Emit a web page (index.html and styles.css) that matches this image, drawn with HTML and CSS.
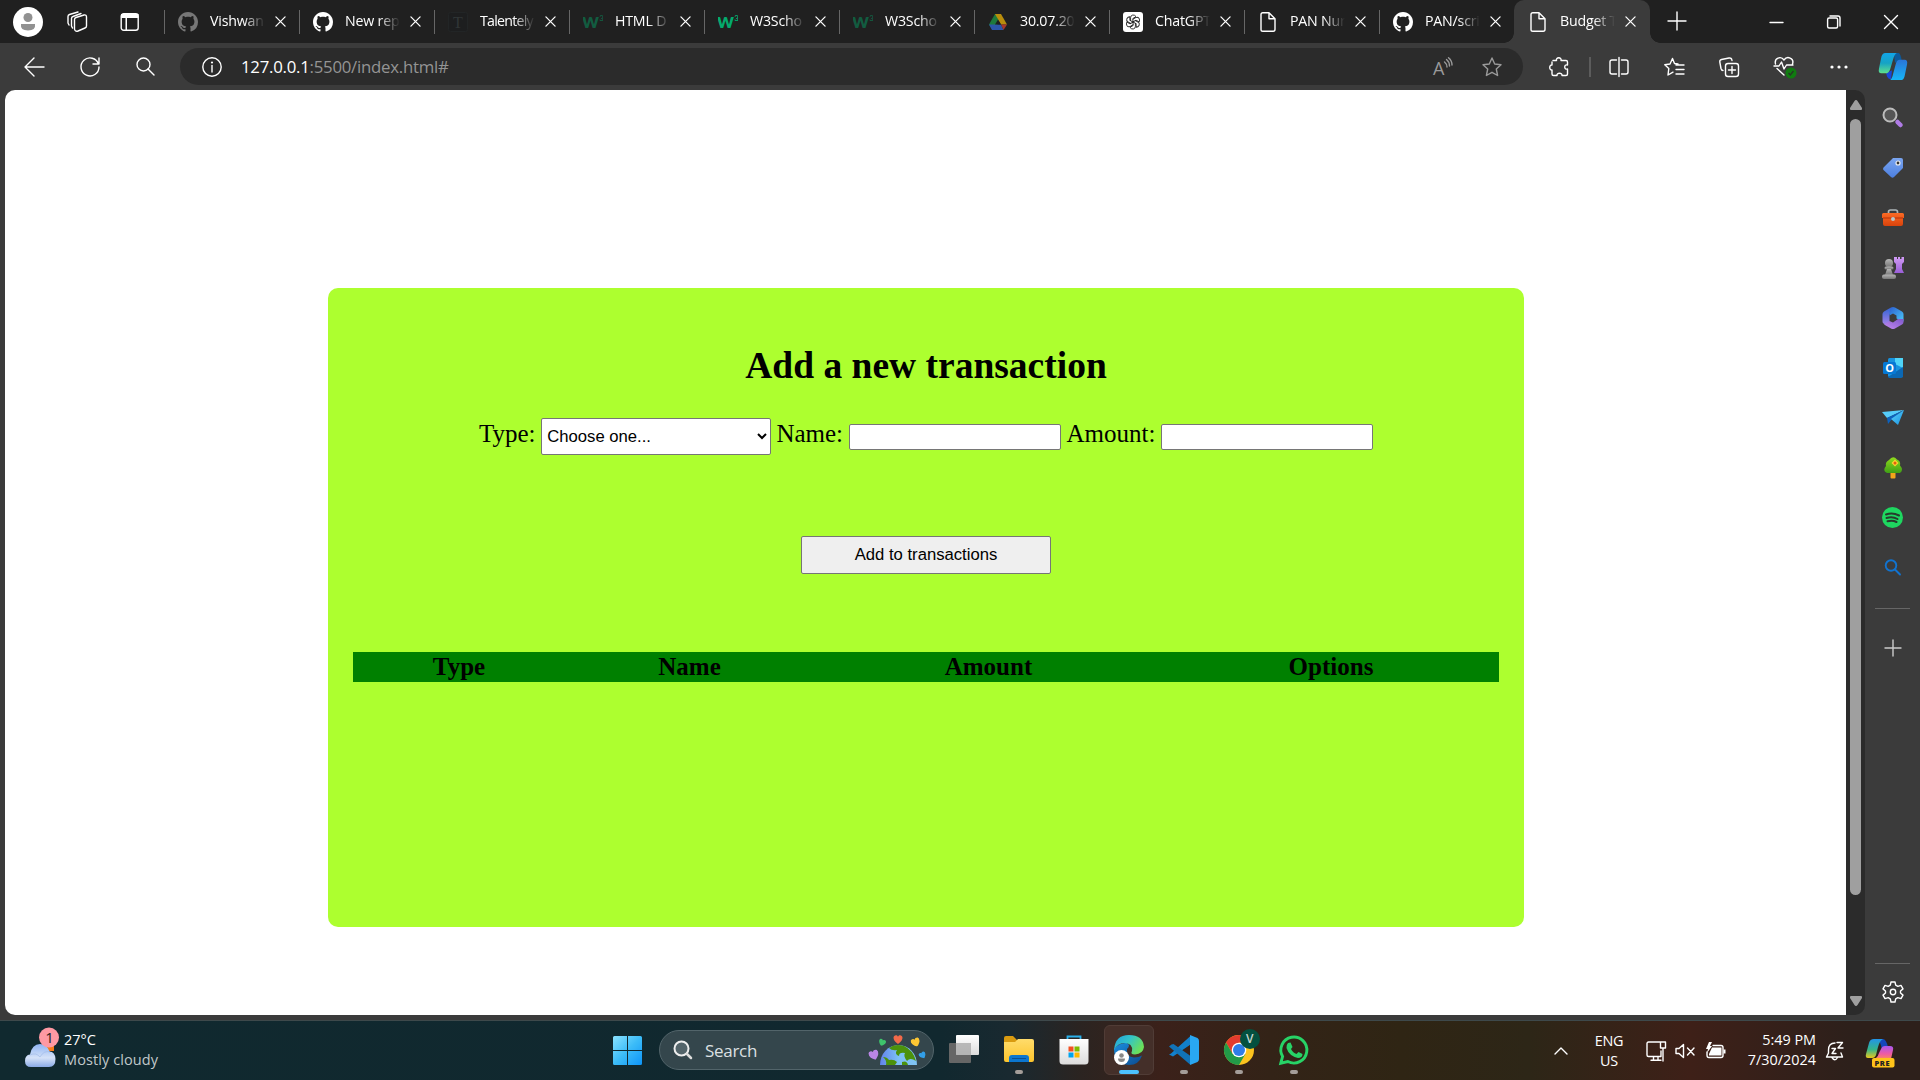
FILE: index.html
```html
<!DOCTYPE html>
<html lang="en">
<head>
<meta charset="utf-8">
<title>Budget Tracker</title>
<link rel="stylesheet" href="styles.css">
</head>
<body>
<svg width="0" height="0" class="defs">
  <defs>
    <linearGradient id="gWin" x1="0" y1="0" x2="1" y2="1"><stop offset="0" stop-color="#8be3ff"/><stop offset=".5" stop-color="#3cbcf8"/><stop offset="1" stop-color="#0d94f8"/></linearGradient>
    <linearGradient id="gCop1" x1="0" y1="0" x2="0" y2="1"><stop offset="0" stop-color="#12a5e8"/><stop offset=".5" stop-color="#16a3c4"/><stop offset="1" stop-color="#5fe08c"/></linearGradient>
    <linearGradient id="gCop2" x1="0" y1="0" x2="0" y2="1"><stop offset="0" stop-color="#2a74d8"/><stop offset="1" stop-color="#17b6f7"/></linearGradient>
    <linearGradient id="gPre1" x1="0" y1="0" x2="0" y2="1"><stop offset="0" stop-color="#2294e8"/><stop offset=".55" stop-color="#35b58a"/><stop offset="1" stop-color="#e9c81c"/></linearGradient>
    <linearGradient id="gPre2" x1="0" y1="0" x2="0" y2="1"><stop offset="0" stop-color="#a857f0"/><stop offset=".6" stop-color="#ef5ba1"/><stop offset="1" stop-color="#fa8a5c"/></linearGradient>
    <linearGradient id="gCloud" x1="0" y1="0" x2="0" y2="1"><stop offset="0" stop-color="#8fb4f3"/><stop offset=".6" stop-color="#d5e2f8"/><stop offset="1" stop-color="#8aaae6"/></linearGradient>
    <linearGradient id="gFold" x1="0" y1="0" x2="0" y2="1"><stop offset="0" stop-color="#ffdc6b"/><stop offset="1" stop-color="#fcc42c"/></linearGradient>
    <linearGradient id="gEdge" x1="0" y1="0" x2="1" y2=".5"><stop offset="0" stop-color="#229fdc"/><stop offset=".5" stop-color="#33c4c9"/><stop offset="1" stop-color="#6be05a"/></linearGradient>
    <linearGradient id="gEdge2" x1="0" y1="0" x2="1" y2="1"><stop offset="0" stop-color="#1b8fe0"/><stop offset="1" stop-color="#0c4a8e"/></linearGradient>
    <linearGradient id="gTag" x1="0" y1="0" x2="0" y2="1"><stop offset="0" stop-color="#7aa5f0"/><stop offset="1" stop-color="#4c7fe0"/></linearGradient>
    <linearGradient id="gBox" x1="0" y1="0" x2="0" y2="1"><stop offset="0" stop-color="#fb6a24"/><stop offset="1" stop-color="#d9430c"/></linearGradient>
    <linearGradient id="gRook" x1="0" y1="0" x2="0" y2="1"><stop offset="0" stop-color="#d19bf5"/><stop offset="1" stop-color="#9a5fd8"/></linearGradient>
    <linearGradient id="gPawn" x1="0" y1="0" x2="0" y2="1"><stop offset="0" stop-color="#b5b5b5"/><stop offset="1" stop-color="#777"/></linearGradient>
    <linearGradient id="gPlane" x1="0" y1="0" x2="1" y2="1"><stop offset="0" stop-color="#5fd4fb"/><stop offset="1" stop-color="#1690e0"/></linearGradient>
    <linearGradient id="gM1" x1="0" y1="0" x2="1" y2="1"><stop offset="0" stop-color="#2b5fd0"/><stop offset="1" stop-color="#4cc9fa"/></linearGradient>
    <linearGradient id="gM2" x1="0" y1="1" x2="1" y2="0"><stop offset="0" stop-color="#c38af0"/><stop offset="1" stop-color="#7f58cc"/></linearGradient>
    <linearGradient id="gM3" x1="0" y1="0" x2="0" y2="1"><stop offset="0" stop-color="#2f62d2"/><stop offset="1" stop-color="#a884ea"/></linearGradient>
    <linearGradient id="gTree" x1="0" y1="0" x2="0" y2="1"><stop offset="0" stop-color="#8fdc1c"/><stop offset="1" stop-color="#3f9f16"/></linearGradient>
    <linearGradient id="gWhite" x1="0" y1="0" x2="0" y2="1"><stop offset="0" stop-color="#fff"/><stop offset="1" stop-color="#dcdcdc"/></linearGradient>
    <linearGradient id="gSea" x1="0" y1="0" x2="1" y2="0"><stop offset="0" stop-color="#6283ea"/><stop offset=".5" stop-color="#7cc0f5"/><stop offset="1" stop-color="#80c4f3"/></linearGradient>
  </defs>
  <symbol id="github" viewBox="0 0 16 16"><path fill="currentColor" d="M8 0C3.58 0 0 3.58 0 8c0 3.54 2.29 6.53 5.47 7.59.4.07.55-.17.55-.38 0-.19-.01-.82-.01-1.49-2.01.37-2.53-.49-2.69-.94-.09-.23-.48-.94-.82-1.13-.28-.15-.68-.52-.01-.53.63-.01 1.08.58 1.23.82.72 1.21 1.87.87 2.33.66.07-.52.28-.87.51-1.07-1.78-.2-3.64-.89-3.64-3.95 0-.87.31-1.59.82-2.15-.08-.2-.36-1.02.08-2.12 0 0 .67-.21 2.2.82.64-.18 1.32-.27 2-.27s1.36.09 2 .27c1.53-1.04 2.2-.82 2.2-.82.44 1.1.16 1.92.08 2.12.51.56.82 1.27.82 2.15 0 3.07-1.87 3.75-3.65 3.95.29.25.54.73.54 1.48 0 1.07-.01 1.93-.01 2.2 0 .21.15.46.55.38A8.01 8.01 0 0 0 16 8c0-4.42-3.58-8-8-8z"/></symbol>
  <symbol id="w3" viewBox="0 0 20 20"><text x="-1" y="16" class="w3-w">w</text><text x="16.2" y="8.5" class="w3-3">3</text></symbol>
  <symbol id="doc" viewBox="0 0 20 20"><path class="ln" d="M3 2.5Q3 .7 4.800.7H11L17 6.700V17.300Q17 19.300 15.200 19.300H4.800Q3 19.300 3 17.500ZM11 .7V6.700H17"/></symbol>
  <symbol id="drive" viewBox="0 0 20 20"><path fill="#1e7a3c" d="M7 2H10L13 7 6 18H4.500L1 12.500Z"/><path fill="#b98d0c" d="M7 2H13L19 12.500H13Z"/><path fill="#2c56a8" d="M1 12.500H13L15.500 18H4Z"/><path fill="#a8372c" d="M13 12.500H19L15.500 18Z"/><path fill="#202020" d="M10 7.500L13 12.500H7Z"/></symbol>
  <symbol id="gpt" viewBox="0 0 20 20"><rect width="20" height="20" rx="3" fill="#fff"/><g fill="none" stroke="#222" stroke-width=".9"><path id="petal" d="M7.600 9V5.600Q7.600 3.400 9.800 3 12 2.900 13 4.600L9.900 6.500V10.200"/><use href="#petal" transform="rotate(60 10 10)"/><use href="#petal" transform="rotate(120 10 10)"/><use href="#petal" transform="rotate(180 10 10)"/><use href="#petal" transform="rotate(240 10 10)"/><use href="#petal" transform="rotate(300 10 10)"/></g></symbol>
  <symbol id="x" viewBox="0 0 12 12"><path class="ln" d="M1 1L11 11M11 1L1 11"/></symbol>
  <symbol id="star" viewBox="0 0 20 20"><path class="ln" d="M10 1L12.700 7 19 7.700 14.300 12 15.600 18.500 10 15.300 4.400 18.500 5.700 12 1 7.700 7.300 7Z"/></symbol>
  <symbol id="heart" viewBox="0 0 8 8"><path fill="currentColor" d="M4 8C1 6 0 4 0 2.500 0 .2 3 -.5 4 1.500 5 -.5 8 .2 8 2.500 8 4 7 6 4 8Z"/></symbol>
</svg>

<div class="window">
  <header class="tabstrip">
    <div class="strip-tools">
      <svg class="avatar" viewBox="0 0 30 30"><circle cx="15" cy="15" r="15" fill="#fff"/><circle cx="15" cy="10.500" r="4.500" fill="#919191"/><path fill="#919191" d="M8 17H22Q23 23.500 15 23.500 7 23.500 8 17Z"/></svg>
      <svg class="workspaces" viewBox="0 0 22 22"><g class="ln"><path d="M8.500 8.500Q8.500 7 10 6.500L18 4Q20.500 3.500 20.500 6V15Q20.500 16.500 19 17L12 20Q9 21 8.500 18Z"/><path d="M6.500 17L5.500 15V7.500Q5.500 6 7 5.500L15 2.500"/><path d="M3 14L2 12V5.500Q2 4 3.500 3.500L12 1"/></g></svg>
      <svg class="tabmenu" viewBox="0 0 20 20"><rect class="ln" x="1.200" y="1.700" width="17" height="16.600" rx="2.500"/><path fill="#fff" d="M1 2H18.500V6H1ZM5.500 6H7V18H5.500Z"/></svg>
    </div>
    <nav class="tabs">
      <div class="tab"><svg class="fav dim"><use href="#github"/></svg><span>Vishwan</span><svg class="close"><use href="#x"/></svg></div>
      <div class="tab"><svg class="fav"><use href="#github"/></svg><span>New rep</span><svg class="close"><use href="#x"/></svg></div>
      <div class="tab"><svg class="fav" viewBox="0 0 20 20"><rect x=".5" y=".5" width="19" height="19" rx="2" fill="#1d1e1f" stroke="#222526"/><text x="5" y="16" class="tal">T</text></svg><span class="tight">Talentely</span><svg class="close"><use href="#x"/></svg></div>
      <div class="tab"><svg class="fav w3-dim"><use href="#w3"/></svg><span>HTML D</span><svg class="close"><use href="#x"/></svg></div>
      <div class="tab"><svg class="fav w3-on"><use href="#w3"/></svg><span>W3Scho</span><svg class="close"><use href="#x"/></svg></div>
      <div class="tab"><svg class="fav w3-dim"><use href="#w3"/></svg><span>W3Scho</span><svg class="close"><use href="#x"/></svg></div>
      <div class="tab"><svg class="fav"><use href="#drive"/></svg><span>30.07.20</span><svg class="close"><use href="#x"/></svg></div>
      <div class="tab"><svg class="fav"><use href="#gpt"/></svg><span>ChatGPT</span><svg class="close"><use href="#x"/></svg></div>
      <div class="tab"><svg class="fav"><use href="#doc"/></svg><span>PAN Nur</span><svg class="close"><use href="#x"/></svg></div>
      <div class="tab"><svg class="fav"><use href="#github"/></svg><span>PAN/scri</span><svg class="close"><use href="#x"/></svg></div>
      <div class="tab active"><svg class="fav"><use href="#doc"/></svg><span>Budget T</span><svg class="close"><use href="#x"/></svg></div>
    </nav>
    <svg class="newtab" viewBox="0 0 18 18"><path class="ln" d="M9 0V18M0 9H18"/></svg>
    <div class="controls">
      <svg viewBox="0 0 14 14"><path class="ln" d="M1 7.500H14"/></svg>
      <svg viewBox="0 0 14 14"><rect class="ln" x=".6" y="3" width="10" height="10" rx="1.500"/><path class="ln" d="M3 1H11Q13 1 13 3V11"/></svg>
      <svg viewBox="0 0 14 14"><path class="ln" d="M.5 .5L13.500 13.500M13.500 .5L.5 13.500"/></svg>
    </div>
  </header>

  <div class="toolbar">
    <div class="nav-buttons">
      <svg viewBox="0 0 20 20"><path class="ln" d="M20 10H1M10 1L1 10 10 19"/></svg>
      <svg viewBox="0 0 20 20"><path class="ln" d="M18.500 7A9 9 0 1 0 19 10M19 1V7H13"/></svg>
      <svg viewBox="0 0 20 20"><circle class="ln" cx="7.500" cy="7.500" r="6.500"/><path class="ln" d="M12 12L18 18"/></svg>
    </div>
    <div class="address">
      <svg class="info" viewBox="0 0 20 20"><circle class="ln" cx="10" cy="10" r="9.200"/><path class="ln" d="M10 8.500V15"/><circle cx="10" cy="5.500" r="1.100" fill="#fff"/></svg>
      <div class="url"><b>127.0.0.1</b>:5500/index.html#</div>
      <svg class="read" viewBox="0 0 20 20"><text x="0" y="17.500">A</text><path class="ln" d="M11.500 5Q14 7 14 10M13.500 2.500Q16.500 5 16.500 9M15.500 .7Q19 3.500 19 8"/></svg>
      <svg class="fav-star"><use href="#star"/></svg>
    </div>
    <div class="actions">
      <svg viewBox="0 0 20 20"><path class="ln" d="M4 3.500H7.500C6.500-.2 13-.2 12 3.500H17Q18.500 3.500 18.500 5V8C14.800 7 14.800 13 18.500 12V17Q18.500 18.500 17 18.500H13C13.500 15.500 7.500 15.500 8 18.500H4.500Q3 18.500 3 17V13C0 13.500 0 7.500 3 8V5"/></svg>
      <i class="divider"></i>
      <svg viewBox="0 0 20 20"><path class="ln" d="M7.500 3H3Q1 3 1 5V15Q1 17 3 17H7.500M12.500 3H17Q19 3 19 5V15Q19 17 17 17H12.500M10 .5V19.500"/></svg>
      <svg viewBox="0 0 20 20"><path class="ln" d="M14 7L10.500 6.500 8.500 1.500 6 7 .8 7.700 4.800 11.500 4 18 9 15.200M12 8H20M12 12.500H20M12 17H20"/></svg>
      <svg viewBox="0 0 20 20"><rect class="ln" x="6.500" y="6.500" width="13" height="13" rx="2.500"/><path class="ln" d="M13 9.500V16.500M9.500 13H16.500M4 13.500Q2.500 13.500 2 11.500L.8 5Q.5 3 2.500 2.500L10 1Q12.500 .5 13 3.500"/></svg>
      <svg class="health" viewBox="0 0 22 22"><path class="ln" d="M1.500 8C0 2 7-.5 10 4 13-.5 20.500 2 18.500 8M0 10H5L7.500 6 10 13 12.500 9H19M3 12.500L10 19"/><circle cx="17" cy="17" r="5.500" fill="#107c10"/><path d="M14.500 17L16.300 19 19.500 15" fill="none" stroke="#263626" stroke-width="1.300"/></svg>
      <svg viewBox="0 0 20 20" fill="#fff"><circle cx="3" cy="10" r="1.600"/><circle cx="10" cy="10" r="1.600"/><circle cx="17" cy="10" r="1.600"/></svg>
    </div>
    <svg class="copilot" viewBox="0 0 30 30"><path fill="#0c5a9c" d="M16 1H21Q23 2 24 9L17 11Z"/><path fill="#1946d8" d="M8 22L14 19 13 28H12Q9 28 8 22Z"/><path fill="url(#gCop1)" d="M7 1H19Q16.500 2 15 8L12 18Q10.500 22 7 22H3Q-.5 22 .5 17L3 5Q4 1 7 1Z"/><path fill="url(#gCop2)" d="M22 8H27Q30.500 8 29.500 13L27 25Q26 29 23 29H12Q14 28 15 23L18 12Q19 8 22 8Z"/></svg>
  </div>

  <div class="workarea">
    <main class="page">
      <section class="card">
        <h2>Add a new transaction</h2>
        <form class="fields">
          <label>Type:</label>
          <select><option>Choose one...</option></select>
          <label>Name:</label>
          <input type="text">
          <label>Amount:</label>
          <input type="text">
        </form>
        <button type="button">Add to transactions</button>
        <table>
          <colgroup><col class="c1"><col class="c2"><col class="c3"><col class="c4"></colgroup>
          <tr><th>Type</th><th>Name</th><th>Amount</th><th>Options</th></tr>
        </table>
      </section>
    </main>
    <div class="scrollbar">
      <svg viewBox="0 0 12 10"><path d="M6 0Q7 0 7.500 1L12 8Q12.500 10 11 10H1Q-.5 10 0 8L4.500 1Q5 0 6 0Z"/></svg>
      <div class="thumb"></div>
      <svg class="down" viewBox="0 0 12 10"><path d="M6 0Q7 0 7.500 1L12 8Q12.500 10 11 10H1Q-.5 10 0 8L4.500 1Q5 0 6 0Z"/></svg>
    </div>
    <aside class="sidebar">
      <div class="apps">
        <svg viewBox="0 0 22 22"><circle cx="8" cy="8" r="6.500" fill="#555" stroke="#bcbcbc" stroke-width="2"/><path d="M15.500 15L18.500 18" stroke="#b07ce6" stroke-width="4.500" stroke-linecap="round"/></svg>
        <svg viewBox="0 0 22 22"><path fill="url(#gTag)" d="M11 1H19Q21 1 21 3V11L12 20Q10.500 21.500 9 20L1.500 13Q.5 12 1.500 10.500Z"/><circle cx="16" cy="6" r="2" fill="#333" stroke="#eee" stroke-width="1.200"/></svg>
        <svg viewBox="0 0 22 22"><path fill="none" stroke="#aeb7b9" stroke-width="1.700" d="M6.500 7V5Q6.500 3 8.500 3H13.500Q15.500 3 15.500 5V7"/><path fill="url(#gBox)" d="M1.500 6H20.500Q22 6 22 7.500V11H21V17Q21 19 19 19H3Q1 19 1 17V11H0V7.500Q0 6 1.500 6Z"/><path stroke="#b73308" d="M1 11H21"/><circle cx="11" cy="12" r="2" fill="#b9c7c9"/></svg>
        <svg viewBox="0 0 22 22"><path fill="url(#gRook)" d="M12 0H15V2H16V0H18V2H19.500V0H22V5L20 7V12L22 16H12L14 12V7L12 5Z"/><g fill="url(#gPawn)"><circle cx="7" cy="6" r="4"/><rect x="2.500" y="9.500" width="9" height="3" rx="1.500"/><path d="M5 12H9L11 18H3Z"/><rect x="0" y="17.500" width="14" height="4.500" rx="2"/></g></svg>
        <svg viewBox="0 0 22 22"><path fill="url(#gM3)" d="M11 0L7.500 7.500V14.500L5 18.500 1.500 16.500Q.5 16 .5 14.500V7Q.5 5.500 2 4.500L9 .6Z"/><path fill="url(#gM1)" d="M11 0Q12 0 13 .6L20 4.500Q21.500 5.500 21.500 7V14.500L14.500 11.500V8.500L11 6.500 7.500 8.500V4Q8 1 11 0Z"/><path fill="url(#gM2)" d="M21.500 12V15Q21.500 16.500 20 17.500L13 21.500Q11 22.500 9 21.500L2 17.500 7.500 14 11 15.500 16 12Z"/></svg>
        <svg viewBox="0 0 22 22"><rect x="6" y="1" width="15" height="19" rx="1.500" fill="#1793df"/><path fill="#4fd4f8" d="M13 1H21V11L13 7Z"/><path fill="#0b68b4" d="M6 20L21 10V19Q21 21 19 21H7Z"/><rect x="1" y="5" width="13" height="12" rx="1.500" fill="#0678d4"/><text x="3.300" y="15" class="outlook">O</text></svg>
        <svg viewBox="0 0 22 22"><path fill="#56cdfa" d="M0 5L22 3 5 11Z"/><path fill="#0d62bd" d="M5 11L22 3 10 12 6 17Z"/><path fill="url(#gPlane)" d="M22 3L16 18 9 12Z"/></svg>
        <svg viewBox="0 0 22 22"><rect x="8.500" y="15" width="5" height="6.500" rx="1" fill="#f2a51a"/><path fill="url(#gTree)" d="M7 3Q11-2 15 2.500 19 4 18 8.500 22 13 18 16H5Q0 13.500 4 9 3 5 7 3Z"/><path fill="#ffd22e" d="M13 2.500L16.500 6 13 9.500 9.500 6Z"/><circle cx="13" cy="6" r="1.500" fill="#e2600e"/></svg>
        <svg viewBox="0 0 22 22"><circle cx="10.500" cy="10.500" r="10.500" fill="#1ed760"/><path fill="none" stroke="#263c2d" stroke-linecap="round" stroke-width="2" d="M4 7.500Q10.500 5 17 8.500M4.500 11Q10.500 9 15.500 12M5.500 14.300Q10.500 12.800 14.500 15"/></svg>
        <svg viewBox="0 0 22 22"><g fill="none" stroke="#1173d0" stroke-width="1.900" stroke-linecap="round"><circle cx="9" cy="8.500" r="5.300"/><path d="M13 12.500L18 17.500"/></g></svg>
      </div>
      <hr>
      <svg class="add" viewBox="0 0 16 16"><path class="ln" d="M8 0V16M0 8H16"/></svg>
      <div class="grow"></div>
      <hr>
      <svg class="gear" viewBox="0 0 22 22"><circle class="ln" cx="11" cy="11" r="2.700"/><path class="ln" d="M9 1H13L13.700 4.200 15.800 5.400 19 4.400 21 7.900 18.500 10V12L21 14.100 19 17.600 15.800 16.600 13.700 17.800 13 21H9L8.300 17.800 6.200 16.600 3 17.600 1 14.100 3.500 12V10L1 7.900 3 4.400 6.200 5.400 8.300 4.200Z"/></svg>
    </aside>
  </div>
</div>

<footer class="taskbar">
  <div class="weather">
    <svg viewBox="0 0 36 46"><path fill="#f77b18" d="M20 20H30V27H20Z"/><path fill="url(#gCloud)" d="M7 43Q1 43 1 37 1 31 6 30.500 8 20 16 20 23 20 25.500 27.500 31 27.500 31.500 35 31.500 43 25 43Z"/><path fill="none" stroke="#9db7e6" d="M6 31Q12 28 16 33 20 26 26 28" opacity=".6"/><circle cx="25" cy="13.500" r="10" fill="#fe99a3"/><text x="21.200" y="19" class="badge-n">1</text></svg>
    <div><p>27°C</p><p class="soft">Mostly cloudy</p></div>
  </div>
  <div class="dock">
    <svg class="start" viewBox="0 0 29 29"><path fill="url(#gWin)" d="M1.500 0H14V14H0V1.500Q0 0 1.500 0ZM15 0H27.500Q29 0 29 1.500V14H15ZM0 15H14V29H1.500Q0 29 0 27.500ZM15 15H29V27.500Q29 29 27.500 29H15Z"/></svg>
    <div class="search">
      <svg class="mag" viewBox="0 0 20 20"><circle cx="8.500" cy="8.500" r="7" fill="#53646a" stroke="#eee" stroke-width="2"/><path d="M14 14L18 18" stroke="#ddd" stroke-width="2.500" stroke-linecap="round"/></svg>
      <span>Search</span>
      <svg class="earth" viewBox="0 0 58 32"><path fill="url(#gSea)" d="M11 31A18.500 20 0 0 1 48 31Z"/><path fill="#4c920c" d="M14 23Q18 23 20 26 25 25 28 28L26 31H17Q18 26 14 23ZM20 14Q26 9 35 12 44 16 47 27 41 23 38 27 34 22 36 19 30 18 30 22 25 20 28 16 23 17 20 14ZM33 28Q38 26 39 31H33Z"/><use href="#heart" x="0" y="16" width="10" height="10" color="#b985e4" transform="rotate(-20 5 21)"/><use href="#heart" x="9" y="5" width="8" height="7" color="#3ec46c" transform="rotate(20 13 9)"/><use href="#heart" x="24" y="1" width="10" height="9" color="#f36a4a"/><use href="#heart" x="42" y="4" width="9" height="9" color="#fcc633" transform="rotate(-20 46 8)"/><use href="#heart" x="50" y="17" width="7" height="8" color="#329fe8" transform="rotate(-30 54 21)"/></svg>
    </div>
    <div class="slot"><svg viewBox="0 0 30 30"><rect x="0" y="8" width="22" height="20" rx="1" fill="#666"/><rect x="7" y="0" width="23" height="20" rx="1" fill="url(#gWhite)"/><path fill="#aaa" opacity=".8" d="M7 8H22V20H7Z"/></svg></div>
    <div class="slot"><svg viewBox="0 0 30 30"><path fill="#d99b10" d="M0 3Q0 1 2 1H9L13 5V8H0Z"/><path fill="url(#gFold)" d="M0 7H11L14 4H28Q30 4 30 6V25Q30 27 28 27H2Q0 27 0 25Z"/><path fill="#0b76cf" d="M5 27V23Q5 20 8 20H22Q25 20 25 23V27Z"/><path stroke="#0a4f92" d="M8 23.500H22"/></svg><i></i></div>
    <div class="slot"><svg viewBox="0 0 30 30"><path fill="none" stroke="#2ab0ea" stroke-width="1.800" d="M8.500 5V1.500H21.500V5"/><path fill="url(#gWhite)" d="M.5 4H29.500V26Q29.500 29.500 26 29.500H4Q.5 29.500 .5 26Z"/><path fill="#f25022" d="M9.500 11.500H14.500V16.500H9.500Z"/><path fill="#7fba00" d="M15.500 11.500H20.500V16.500H15.500Z"/><path fill="#00a4ef" d="M9.500 17.500H14.500V22.500H9.500Z"/><path fill="#ffb900" d="M15.500 17.500H20.500V22.500H15.500Z"/></svg></div>
    <div class="slot current"><svg viewBox="0 0 30 30"><path fill="url(#gEdge2)" d="M0 14Q6 7 13 8 17 10 13 14 12 22 20 22.500 25 22.500 28 20.500 25 30 15 30 0 29 0 14Z"/><path fill="url(#gEdge)" d="M0 15Q1 0 15 0 29 0 30 12 29 19 21 19.500 16 19.500 18 16 19 8 10 8 4 8 0 15Z"/><circle cx="7.500" cy="22.500" r="7.500" fill="#fff"/><circle cx="7.500" cy="20.500" r="2.300" fill="#888"/><path fill="#888" d="M4 23.500H11Q11 27 7.500 27 4 27 4 23.500Z"/></svg><i></i></div>
    <div class="slot"><svg viewBox="0 0 30 30"><path fill="#1280cc" d="M2 18.500L21.500 1 23 8.500 4 21.500 0 19.500Z"/><path fill="#1173b8" d="M2.500 9.500L0 11.500 21 29.500 23 22 4.500 9Z"/><path fill="#29a7f2" d="M21 0L28.500 3Q30 4 30 6V24Q30 26 28.500 27L21 30Z"/></svg><i></i></div>
    <div class="slot"><svg viewBox="0 0 36 36" class="chrome"><circle cx="15" cy="21" r="15" fill="#fcc31e"/><path fill="#e33b2e" d="M2 13.500A15 15 0 0 1 28 13.500H15L8.500 24.800Z"/><path fill="#229a48" d="M2 13.500A15 15 0 0 0 15 36L21.500 24.800H8.500Z"/><circle cx="15" cy="21" r="7.300" fill="#fff"/><circle cx="15" cy="21" r="6" fill="#2f7de8"/><circle cx="26" cy="10" r="10" fill="#04503f"/><text x="22" y="14.300" class="vbadge">V</text></svg><i></i></div>
    <div class="slot"><svg viewBox="0 0 30 30"><path fill="none" stroke="#27d366" stroke-width="2.900" d="M1.800 28.200L3.600 21.500A13 13 0 1 1 8.800 26.500Z"/><path fill="#27d366" d="M9 8L11.500 7.500 13.500 12 12 14Q14 18 17.500 19L19.500 17 23.500 19Q23.500 23 19 23 10 21 7.500 13 7 10 9 8Z"/></svg><i></i></div>
  </div>
  <div class="tray">
    <svg class="chev" viewBox="0 0 14 8"><path class="ln" d="M1 7L7 1 13 7"/></svg>
    <div class="lang">ENG<br>US</div>
    <svg class="net" viewBox="0 0 20 20"><path class="ln" d="M14 1H2.500Q1 1 1 2.500V14Q1 15.500 2.500 15.500H15V10M5 19.300H15M7.500 16V19M12 16V19M14.500 1H19.500V7H14.500ZM17 7V20"/></svg>
    <svg class="vol" viewBox="0 0 20 16"><path class="ln" d="M1 5.500H4L8.500 1.500V14.500L4 10.500H1ZM12.500 5L19 12M19 5L12.500 12"/></svg>
    <svg class="bat" viewBox="0 0 22 18"><path class="ln" d="M8 3.500H16Q18 3.500 18 5.500V13.500Q18 15.500 16 15.500H4Q2 15.500 2 13V10"/><path fill="#fff" d="M7 5.500H16.500V13.500H4V12ZM18.500 7.500H20.500V11.500H18.500ZM4 0L1 7H3L2 11 7 4H5L7 0Z"/></svg>
    <div class="clock">5:49 PM<br>7/30/2024</div>
    <svg class="bell" viewBox="0 0 20 20"><path class="ln" d="M10 2Q3.500 2 3.500 9V12L1.500 16H17.500L16 12M7 16.500Q10 21 12.500 16.500M7 7.500H10.500L7 12.500H11M12 1.500H17.500L13 7H18"/></svg>
    <svg class="pre" viewBox="0 0 30 30"><path fill="#1546bb" d="M14 1H18Q21 1 23 9L17 11Z"/><path fill="url(#gPre1)" d="M9 1H18Q15 2 13 9L11 17Q10 20 7 20H3Q0 20 1 16L4 5Q5 1 9 1Z"/><path fill="url(#gPre2)" d="M20 8H25Q29 8 28 12L26 21H6Q12 22 14 15L16 11Q17 8 20 8Z"/><rect x="7" y="20" width="22.500" height="9.500" rx="2" fill="#ffc31a"/><text x="9.600" y="27.800" class="pretext">PRE</text></svg>
  </div>
</footer>
</body>
</html>
```
FILE: styles.css
```css
* { box-sizing: border-box; }
body {
  margin: 0;
  width: 1920px;
  height: 1080px;
  overflow: hidden;
  display: flex;
  flex-direction: column;
  background: #3b3b3b;
  color: #fff;
  font-family: "Open Sans", "Noto Sans", sans-serif;
}
svg { display: block; flex: none; overflow: visible; }
.defs { position: absolute; }
.ln { fill: none; stroke: currentColor; stroke-width: 1.4; stroke-linejoin: round; stroke-linecap: round; }
.window { height: 1020px; display: flex; flex-direction: column; }

/* tab strip */
.tabstrip { height: 43px; display: flex; background: #202020; }
.strip-tools { width: 164px; display: flex; align-items: center; padding-left: 13px; }
.avatar { width: 30px; height: 30px; }
.workspaces { width: 22px; height: 22px; margin-left: 23px; }
.tabmenu { width: 20px; height: 20px; margin-left: 32px; }
.tabs { display: flex; }
.tab { position: relative; width: 135px; display: flex; align-items: center; padding-left: 14px; font-size: 14.2px; letter-spacing: -0.2px; }
.tab::before { content: ""; position: absolute; left: 0; top: 10px; width: 1px; height: 24px; background: #666; }
.tab.active { background: #3b3b3b; border-radius: 10px 10px 0 0; width: 136px; }
.tab.active::before { left: -10px; top: 33px; width: 10px; height: 10px; background: radial-gradient(circle at 0 0, #202020 9.5px, #3b3b3b 10px); }
.tab.active::after { content: ""; position: absolute; right: -10px; top: 33px; width: 10px; height: 10px; background: radial-gradient(circle at 100% 0, #202020 9.5px, #3b3b3b 10px); }
.fav { width: 20px; height: 20px; margin-right: 12px; }
.dim { color: #777; }
.w3-on { fill: #04aa6d; }
.w3-dim { fill: #125c40; }
.w3-w { font: 900 21px "Lato", sans-serif; }
.w3-3 { font: 700 8px "Lato", sans-serif; }
.tal { font: 16px "Liberation Serif", serif; fill: #303536; }
.tab span { width: 56px; height: 22px; line-height: 20px; overflow: hidden; white-space: nowrap; -webkit-mask-image: linear-gradient(90deg, #000 60%, transparent 98%); mask-image: linear-gradient(90deg, #000 60%, transparent 98%); }
.tab .tight { letter-spacing: -0.75px; }
.close { width: 11px; height: 11px; margin-left: 9px; }
.newtab { width: 18px; height: 18px; margin: 12px 0 0 18px; }
.controls { margin-left: auto; display: flex; align-items: center; padding-right: 22px; gap: 43.5px; }
.controls svg { width: 14px; height: 14px; }

/* toolbar */
.toolbar { height: 47px; display: flex; align-items: center; padding-left: 6px; }
.nav-buttons { display: flex; width: 174px; gap: 36px; padding-left: 18px; }
.nav-buttons svg, .actions svg { width: 20px; height: 20px; }
.address { width: 1343px; height: 37px; border-radius: 19px; background: #2b2b2b; display: flex; align-items: center; padding: 0 21px 0 22px; }
.info { width: 20px; height: 20px; }
.url { margin-left: 19px; flex: 1; font-size: 16.8px; color: #949494; letter-spacing: -0.25px; line-height: 24px; }
.url b { color: #fff; font-weight: 400; }
.read { width: 20px; height: 20px; color: #9a9a9a; margin-right: 29px; }
.read text { font: 18px "Open Sans", sans-serif; fill: #9a9a9a; }
.fav-star { width: 20px; height: 20px; color: #9a9a9a; }
.actions { display: flex; align-items: center; padding-left: 26px; width: 336px; }
.actions svg { margin-right: 35px; }
.actions svg:first-child { margin-right: 20px; }
.actions svg:last-child { margin-right: 0; }
.actions .health { width: 22px; height: 22px; margin-right: 33px; }
.divider { width: 2px; height: 20px; background: #5c5c5c; margin-right: 18px; }
.copilot { width: 30px; height: 29px; margin-left: 19px; }

/* page and side areas */
.workarea { height: 925px; display: flex; padding-left: 5px; }
.page { width: 1841px; background: #fff; border-radius: 10px 0 0 10px; color: #000; padding: 198px 0 0 323px; }
.card { width: 1196px; height: 639px; border-radius: 10px; background: #adff2f; padding: 0 25px; font: 25px "Liberation Serif", serif; text-align: center; display: flex; flex-direction: column; align-items: center; }
.card h2 { font-size: 37.5px; line-height: 43px; margin: 56px 0 31px; }
.fields { display: flex; align-items: baseline; gap: 5.7px; height: 40px; white-space: nowrap; }
.card select, .card input, .card button { font: 16.667px "Liberation Sans", sans-serif; border: 1px solid #767676; border-radius: 2px; color: #000; }
.card select { width: 229.5px; height: 37px; background: #fff; padding: 0 1px; }
.card input { width: 212px; height: 26px; background: #fff; padding: 1px 2px; }
.card button { width: 250px; height: 38px; background: #efefef; margin-top: 78px; }
.card table { width: 1146px; margin-top: 78px; border-collapse: collapse; table-layout: fixed; background: #008000; }
.card th { padding: 0; height: 30px; line-height: 30px; }
.c1 { width: 212px; }
.c2 { width: 249px; }
.c3 { width: 349px; }
.c4 { width: 336px; }
.c4 + th { padding-right: 1px; }
.scrollbar { width: 19px; background: #2b2b2b; border-radius: 0 10px 10px 0; display: flex; flex-direction: column; align-items: center; padding-top: 10px; }
.scrollbar svg { width: 12px; height: 10px; fill: #9f9f9f; }
.thumb { width: 11px; height: 776px; background: #9f9f9f; border-radius: 6px; margin: 9px 0 101px; }
.down { transform: rotate(180deg); }
.sidebar { width: 55px; display: flex; flex-direction: column; align-items: center; padding-top: 17px; }
.apps { display: flex; flex-direction: column; gap: 28px; }
.apps svg, .gear { width: 22px; height: 22px; }
.outlook { font: 700 11px "Open Sans", sans-serif; fill: #fff; }
.sidebar hr { width: 35px; height: 1px; border: 0; background: #666; margin: 29px 0 0; }
.add { width: 16px; height: 16px; margin-top: 31px; color: #ccc; }
.grow { flex: 1; }
.gear { margin: 17px 0 12px; }

/* taskbar */
.taskbar { position: relative; height: 60px; display: flex; background: linear-gradient(90deg, #10292f 0, #11282f 940px, #192930 1010px, #2b2421 1080px, #3b211a 1160px, #332317 1270px, #2f2514 1400px, #2d2617 1530px, #3e2018 1690px, #2d201b 1850px); border-top: 1px solid #3e494b; }
.weather { width: 613px; display: flex; padding: 3px 0 0 24px; gap: 4px; font-size: 14.5px; line-height: 20px; }
.weather svg { width: 36px; height: 46px; }
.weather div { padding-top: 6px; }
.weather p { margin: 0; }
.weather .soft { color: #c0c8ca; letter-spacing: 0.1px; }
.badge-n { font: 15px "Open Sans", sans-serif; fill: #222; }
.dock { display: flex; align-items: flex-start; }
.start { width: 29px; height: 29px; margin: 15px 17px 0 0; }
.search { width: 275px; height: 40px; margin: 9px 5px 0 0; border: 1px solid #52646a; border-radius: 20px; background: #34464c; display: flex; align-items: center; padding-left: 13px; font-size: 17px; color: #dce0e2; }
.mag { width: 20px; height: 20px; margin-right: 12px; }
.search span { flex: 1; letter-spacing: -0.3px; }
.earth { width: 58px; height: 32px; margin: 0 6px 0 0; }
.slot { width: 50px; height: 50px; margin: 4px 5px 0 0; border-radius: 6px; border: 1px solid transparent; display: flex; flex-direction: column; align-items: center; padding-top: 9px; }
.slot svg { width: 30px; height: 30px; }
.slot .chrome { width: 36px; height: 36px; margin: -6px 0 0 6px; }
.slot i { width: 8px; height: 4px; border-radius: 2px; background: #a49d99; margin-top: 5px; flex: none; }
.current { background: #442f29; border-color: #503c36; }
.slot.current i { width: 20px; background: #4cc2ff; }
.vbadge { font: 600 12px "Open Sans", sans-serif; fill: #c4d6d0; }
.tray { margin-left: auto; display: flex; align-items: center; width: 366px; font-size: 14.4px; line-height: 20px; color: #fff; }
.chev { width: 14px; height: 8px; }
.lang { margin-left: 26px; width: 30px; text-align: center; letter-spacing: -0.2px; }
.net { width: 20px; height: 20px; margin-left: 22px; }
.vol { width: 20px; height: 16px; margin-left: 9px; }
.bat { width: 22px; height: 18px; margin-left: 10px; }
.clock { width: 90px; text-align: right; letter-spacing: 0; margin: -2px 0 0 -1px; }
.bell { width: 20px; height: 20px; margin-left: 9px; }
.pre { width: 30px; height: 30px; margin: 4px 0 0 20px; }
.pretext { font: 800 7.500px "Open Sans", sans-serif; fill: #222; letter-spacing: .5px; }
```
